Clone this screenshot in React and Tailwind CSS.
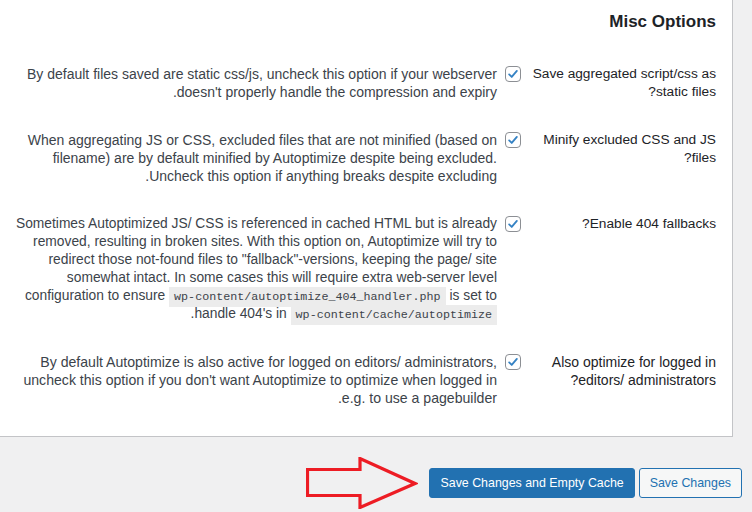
import React from "react";

function Check() {
  return (
    <span className="mt-[1px] flex h-[16px] w-[16px] shrink-0 items-center justify-center rounded-[4px] border border-[#8c8f94] bg-white">
      <svg width="14" height="14" viewBox="0 0 20 20">
        <path d="M4.5 10.5 L8.2 14.2 L15.5 5.5" fill="none" stroke="#3582c4" strokeWidth="2.6" strokeLinecap="round" strokeLinejoin="round" />
      </svg>
    </span>
  );
}

function Code({ children }) {
  return (
    <code className="bg-[#ececec] px-[5px] py-[3px] font-['Liberation_Mono',monospace] text-[11.7px] leading-[14px] text-[#3c434a]">
      {children}
    </code>
  );
}

function Row({ label, children, labelSize, descSize }) {
  return (
    <div className="flex py-[15px] pr-[16px]">
      <div className={"w-[185px] shrink-0 text-right text-[#1d2327] " + labelSize}>{label}</div>
      <div className="mr-[10px] flex">
        <Check />
        <div className={"mr-[8px] whitespace-nowrap text-right text-[#3c434a] " + descSize}>{children}</div>
      </div>
    </div>
  );
}

export default function App() {
  return (
    <div className="h-[512px] w-[752px] overflow-hidden bg-[#f0f0f1] font-['Liberation_Sans',Arial,sans-serif] text-[13px] leading-[18px]">
      <div dir="rtl" className="w-[733px] border-b border-r border-[#c3c4c7] bg-white pb-[14px]">
        <h2 className="pr-[16px] pt-[10px] pb-[16px] text-right text-[17px] font-bold leading-[24px] text-[#1d2327]">
          Misc Options
        </h2>
        <Row labelSize="text-[13.7px]" descSize="text-[14px]" label={<>Save aggregated script/css as<br />static files?</>}>
          By default files saved are static css/js, uncheck this option if your webserver
          <br />
          doesn't properly handle the compression and expiry.
        </Row>
        <Row labelSize="text-[13.7px]" descSize="text-[14px]" label={<>Minify excluded CSS and JS<br />files?</>}>
          When aggregating JS or CSS, excluded files that are not minified (based on
          <br />
          filename) are by default minified by Autoptimize despite being excluded.{"\u200E"}
          <br />
          Uncheck this option if anything breaks despite excluding.
        </Row>
        <Row labelSize="text-[13.7px]" descSize="text-[13.8px]" label={<>Enable 404 fallbacks?</>}>
          Sometimes Autoptimized JS/ CSS is referenced in cached HTML but is already
          <br />
          removed, resulting in broken sites. With this option on, Autoptimize will try to
          <br />
          redirect those not-found files to "fallback"-versions, keeping the page/ site
          <br />
          somewhat intact. In some cases this will require extra web-server level
          <br />
          configuration to ensure <Code>wp-content/autoptimize_404_handler.php</Code> is set to
          <br />
          handle 404's in <Code>wp-content/cache/autoptimize</Code>.
        </Row>
        <Row labelSize="text-[14px]" descSize="text-[14.1px]" label={<>Also optimize for logged in<br />editors/ administrators?</>}>
          By default Autoptimize is also active for logged on editors/ administrators,{"\u200E"}
          <br />
          uncheck this option if you don't want Autoptimize to optimize when logged in
          <br />
          e.g. to use a pagebuilder.
        </Row>
      </div>
      <div className="mt-[31px] flex h-[30px] items-center justify-end pr-[10px]">
        <svg width="112" height="52" viewBox="0 0 112 52" className="mr-[11px] -my-[11px] shrink-0">
          <polygon
            points="1.5,12.5 54,12.5 54,1.5 109,26.5 54,50.5 54,38.5 1.5,38.5"
            fill="none"
            stroke="#ed1c24"
            strokeWidth="3.2"
          />
        </svg>
        <button className="h-[30px] whitespace-nowrap rounded-[3px] border border-[#2271b1] bg-[#2271b1] px-[10px] text-[12.4px] text-white">
          Save Changes and Empty Cache
        </button>
        <button className="ml-[4px] h-[30px] whitespace-nowrap rounded-[3px] border border-[#2271b1] bg-[#f6f7f7] px-[10px] text-[12.4px] text-[#2271b1]">
          Save Changes
        </button>
      </div>
    </div>
  );
}
